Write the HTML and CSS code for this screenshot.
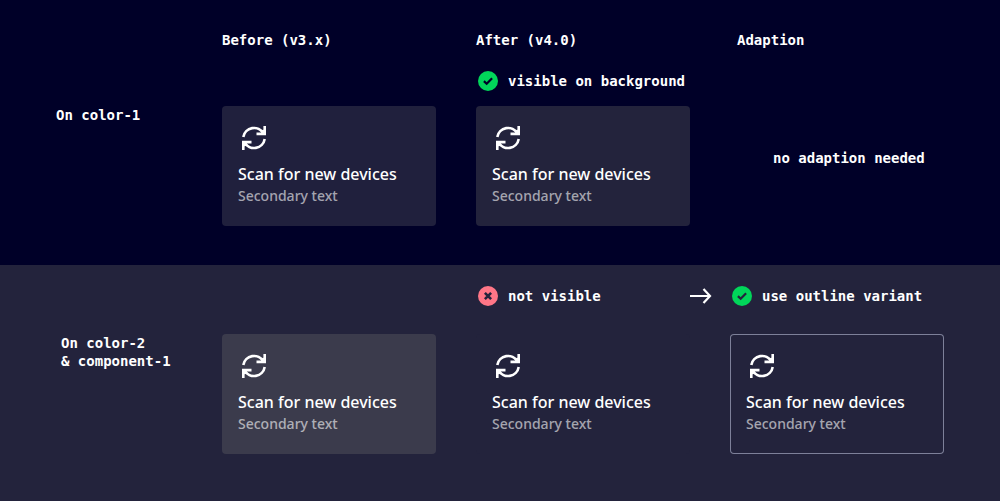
FILE: index.html
```html
<!DOCTYPE html>
<html lang="en">
<head>
<meta charset="utf-8">
<meta name="viewport" content="width=device-width, initial-scale=1">
<title>Card migration: v3.x to v4.0</title>
<link rel="stylesheet" href="styles.css">
</head>
<body>
<svg class="sprite" aria-hidden="true">
  <symbol id="refresh" viewBox="0 0 32 32">
    <g fill="none" stroke="currentColor" stroke-width="2.6">
      <path d="M5.3 15A10.8 10.8 0 0 1 25.4 11.5"/>
      <path d="M26.7 17A10.8 10.8 0 0 1 6.6 20.5"/>
    </g>
    <g fill="currentColor">
      <path d="M25.4 4H28V13.2H18.5V10.6H23.6L22.2 8.8L25.4 7.8Z"/>
      <path d="M6.6 28H4V18.8H13.5V21.4H8.4L9.8 23.2L6.6 24.2Z"/>
    </g>
  </symbol>
  <symbol id="check" viewBox="0 0 20 20">
    <circle cx="10" cy="10" r="10" fill="#01d65a"/>
    <path d="M5.9 10.1L8.7 12.8L14.1 7.3" fill="none" stroke="currentColor" stroke-width="2.2"/>
  </symbol>
  <symbol id="cross" viewBox="0 0 20 20">
    <circle cx="10" cy="10" r="10" fill="#ff7687"/>
    <path d="M6.9 6.9L13.1 13.1M13.1 6.9L6.9 13.1" fill="none" stroke="currentColor" stroke-width="2.6"/>
  </symbol>
  <symbol id="arrow" viewBox="0 0 22 16">
    <path d="M0 8H20M13.5 1L20 8L13.5 15" fill="none" stroke="currentColor" stroke-width="2.2"/>
  </symbol>
</svg>
<main class="page">
  <section class="band band-base">
    <h2 class="heading col-before">Before (v3.x)</h2>
    <h2 class="heading col-after">After (v4.0)</h2>
    <h2 class="heading heading-adaption col-adaption">Adaption</h2>
    <p class="status col-after"><svg class="status-icon"><use href="#check"/></svg>visible on background</p>
    <h3 class="label">On color-1</h3>
    <article class="card card-before col-before">
      <svg class="card-icon"><use href="#refresh"/></svg>
      <h4 class="card-title">Scan for new devices</h4>
      <p class="card-text">Secondary text</p>
    </article>
    <article class="card card-after col-after">
      <svg class="card-icon"><use href="#refresh"/></svg>
      <h4 class="card-title">Scan for new devices</h4>
      <p class="card-text">Secondary text</p>
    </article>
    <p class="note col-adaption">no adaption needed</p>
  </section>
  <section class="band band-raised">
    <p class="status col-after"><svg class="status-icon"><use href="#cross"/></svg>not visible</p>
    <svg class="arrow"><use href="#arrow"/></svg>
    <p class="status col-adaption"><svg class="status-icon"><use href="#check"/></svg>use outline variant</p>
    <h3 class="label label-raised">On color-2<br>&amp; component-1</h3>
    <article class="card card-light col-before">
      <svg class="card-icon"><use href="#refresh"/></svg>
      <h4 class="card-title">Scan for new devices</h4>
      <p class="card-text">Secondary text</p>
    </article>
    <article class="card card-after col-after">
      <svg class="card-icon"><use href="#refresh"/></svg>
      <h4 class="card-title">Scan for new devices</h4>
      <p class="card-text">Secondary text</p>
    </article>
    <article class="card card-outline col-adaption">
      <svg class="card-icon"><use href="#refresh"/></svg>
      <h4 class="card-title">Scan for new devices</h4>
      <p class="card-text">Secondary text</p>
    </article>
  </section>
</main>
</body>
</html>
```

FILE: styles.css
```css
:root {
  --base: #000028;
  --raised: #23233c;
}

* {
  box-sizing: border-box;
  margin: 0;
}

body {
  background: var(--raised);
  color: #fff;
  font: 700 14px/18px "DejaVu Sans Mono", monospace;
}

.sprite {
  display: none;
}

.page {
  display: flex;
  flex-direction: column;
  min-height: 100vh;
}

.band {
  display: grid;
  grid-template-columns: 126px 40px 1fr 40px 1fr 40px 1fr;
  align-content: start;
}

.band-base {
  padding: 31px 56px 39px;
  background: var(--base);
  --surface: var(--base);
}

.band-raised {
  flex: 1;
  padding: 21px 56px 47px;
  background: var(--raised);
  --surface: var(--raised);
}

.col-before { grid-column: 3; }
.col-after { grid-column: 5; }
.col-adaption { grid-column: 7; }

.heading,
.label {
  font: inherit;
}

.heading {
  margin-bottom: 22px;
}

.heading-adaption {
  padding-left: 7px;
}

.status {
  display: flex;
  align-items: center;
  gap: 10px;
  padding-left: 2px;
  margin-bottom: 15px;
}

.band-raised .status {
  margin-bottom: 28px;
}

.status-icon {
  flex: none;
  width: 20px;
  height: 20px;
  color: var(--surface);
}

.arrow {
  grid-column: 6;
  width: 22px;
  height: 16px;
  margin-top: 2px;
}

.label {
  grid-column: 1 / 3;
}

.label-raised {
  padding-left: 5px;
}

.note {
  align-self: center;
  padding: 0 0 16px 43px;
}

.card {
  padding: 16px 16px 20px;
  border-radius: 4px;
  font-family: "Noto Sans", sans-serif;
}

.card-before { background: #20203d; }
.card-after { background: var(--raised); }
.card-light { background: #3b3b4c; }
.card-outline { box-shadow: inset 0 0 0 1px #7d8099; }

.card-icon {
  display: block;
  width: 32px;
  height: 32px;
  margin-bottom: 8px;
}

.card-title {
  font-size: 16px;
  font-weight: 500;
  line-height: 24px;
}

.card-text {
  color: rgb(255 255 255 / 60%);
  font-size: 14px;
  font-weight: 500;
  line-height: 20px;
}
```
